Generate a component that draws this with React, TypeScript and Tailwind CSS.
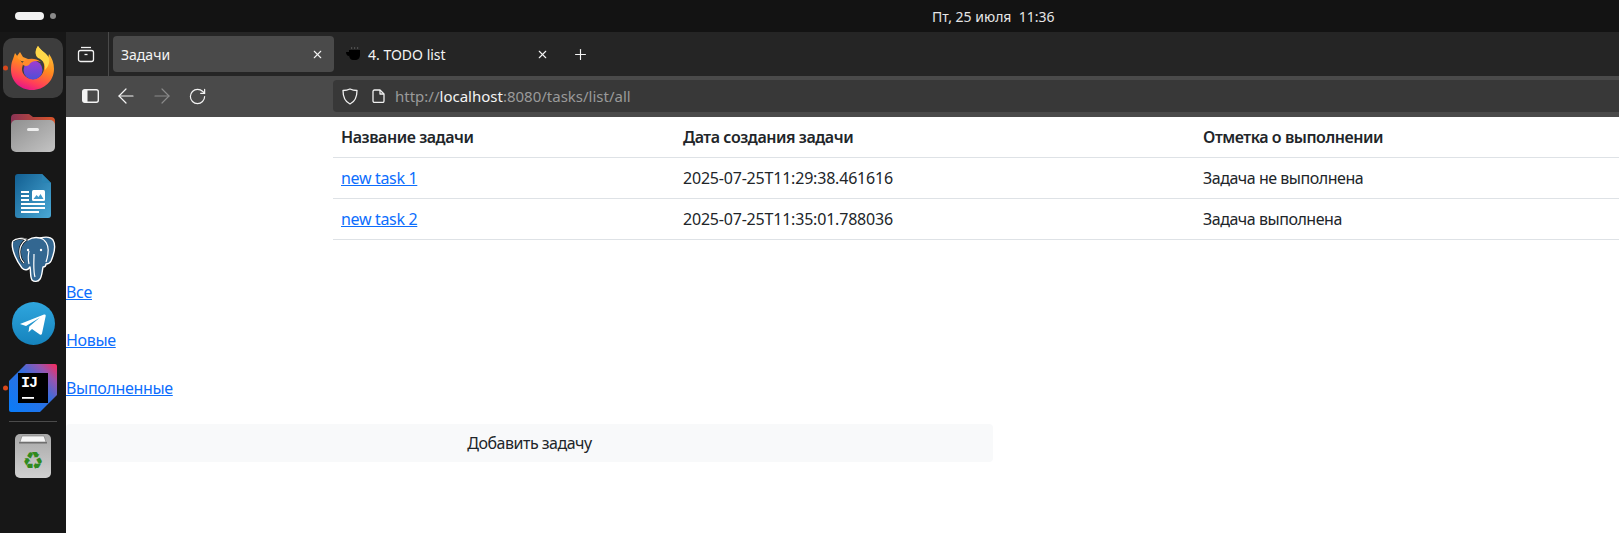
import { ArrowLeft, ArrowRight, Plus, RotateCw, X } from "lucide-react";

const font = { fontFamily: '"Noto Sans", "Liberation Sans", sans-serif' };

function FirefoxIcon() {
  return (
    <svg width="44" height="46" viewBox="0 0 44 46">
      <defs>
        <linearGradient id="ff-body" x1="0.7" y1="0" x2="0.3" y2="1">
          <stop offset="0" stopColor="#ffcb3a" />
          <stop offset="0.45" stopColor="#ff8a1f" />
          <stop offset="0.8" stopColor="#ff3c5a" />
          <stop offset="1" stopColor="#e3128f" />
        </linearGradient>
        <linearGradient id="ff-ball" x1="0.5" y1="0" x2="0.5" y2="1">
          <stop offset="0" stopColor="#a23bd0" />
          <stop offset="1" stopColor="#4f4fd8" />
        </linearGradient>
      </defs>
      <path d="M27 1c-3 4-3 8-1 11 5 1 8 6 7 12-1 7-7 11-13 10-5-1-9-5-9-10 0-2 1-4 1-5L4 8 2 14C0 18 0 22 0 25c0 11 9 20 21 20s22-9 22-21c0-6-2-11-5-15l-1 5C35 8 30 6 27 1z" fill="url(#ff-body)" />
      <path d="M27 1c-3 4-3 9 0 12 5 2 8 6 7 12 3-3 5-7 4-12C36 8 30 6 27 1z" fill="#ffd84a" />
      <path d="M9 7l3 5 5 2c1 0 3 1 3 2-3 0-7 1-10 0-2-1-4-3-4-5z" fill="#ff9a2e" />
      <circle cx="22" cy="25" r="9.500" fill="url(#ff-ball)" />
      <path d="M11 18c4-5 13-6 19-1-5-2-10-1-12 3-3 2-6 1-7-2z" fill="#ff8a2a" />
    </svg>
  );
}

function FolderIcon() {
  return (
    <svg width="44" height="40" viewBox="0 0 44 40">
      <defs>
        <linearGradient id="folder-tab" x1="0" y1="0" x2="1" y2="0">
          <stop offset="0" stopColor="#8a3355" />
          <stop offset="1" stopColor="#d9552a" />
        </linearGradient>
        <linearGradient id="folder-body" x1="0" y1="0" x2="1" y2="1">
          <stop offset="0" stopColor="#8f8f8f" />
          <stop offset="1" stopColor="#c4c4c4" />
        </linearGradient>
      </defs>
      <path d="M0 6a4 4 0 0 1 4-4h14l4 3h18a4 4 0 0 1 4 4v8H0z" fill="url(#folder-tab)" />
      <rect x="0" y="8" width="44" height="32" rx="5" fill="url(#folder-body)" />
      <rect x="16" y="16" width="12" height="3" rx="1.5" fill="#eeeeee" />
    </svg>
  );
}

function WriterIcon() {
  return (
    <svg width="36" height="44" viewBox="0 0 36 44">
      <defs>
        <linearGradient id="writer-bg" x1="0" y1="0" x2="1" y2="1">
          <stop offset="0" stopColor="#125f92" />
          <stop offset="1" stopColor="#4aa9d6" />
        </linearGradient>
      </defs>
      <path d="M3 0h24l9 9v32a3 3 0 0 1-3 3H3a3 3 0 0 1-3-3V3a3 3 0 0 1 3-3z" fill="url(#writer-bg)" />
      <path d="M27 0l9 9h-7a2 2 0 0 1-2-2z" fill="#2a84b4" />
      <rect x="6" y="17" width="8" height="2" fill="#fff" />
      <rect x="6" y="21" width="8" height="2" fill="#fff" />
      <rect x="6" y="25" width="8" height="2" fill="#fff" />
      <rect x="6" y="29" width="24" height="2" fill="#fff" />
      <rect x="6" y="33" width="24" height="2" fill="#fff" />
      <rect x="6" y="37" width="18" height="2" fill="#fff" />
      <rect x="17" y="16" width="13" height="11" rx="1.5" fill="#fff" />
      <path d="M18.500 25l3-4 2 2 2-3 3 5z" fill="#3f98c8" />
    </svg>
  );
}

function PostgresIcon() {
  return (
    <svg width="46" height="48" viewBox="0 0 46 48">
      <path d="M3 5C8 1 14 2 18 4c3-2 8-3 12-2 4-1 10-2 13 2 3 5 1 14-2 21-1 2-3 3-5 3 0 2-1 3-3 3-1 5-1 9-3 12-2 3-6 3-8 1-2-3-1-8-2-13-2 3-5 4-8 1C9 28 7 25 5 20 3 15 1 9 3 5z" fill="#336791" stroke="#ffffff" strokeWidth="1.4" strokeLinejoin="round" />
      <path d="M3 5C6 2 12 2 16 4c-4 3-7 8-6 14 0 3 2 7 4 9" fill="#336791" stroke="#000000" strokeWidth="2.4" />
      <path d="M3 5C6 2 12 2 16 4c-4 3-7 8-6 14 0 3 2 7 4 9" fill="none" stroke="#ffffff" strokeWidth="1.2" />
      <path d="M30 2c5 1 9 7 8 14 0 4-1 7-2 10M24 18c0 8-1 16 1 23M19 15c-1 5-1 9 0 13" fill="none" stroke="#ffffff" strokeWidth="1.2" />
      <circle cx="18" cy="14" r="1.2" fill="#fff" />
      <circle cx="31" cy="14" r="1.2" fill="#fff" />
    </svg>
  );
}

function TelegramIcon() {
  return (
    <svg width="43" height="43" viewBox="0 0 43 43">
      <defs>
        <linearGradient id="tg-bg" x1="0.5" y1="0" x2="0.5" y2="1">
          <stop offset="0" stopColor="#2fa6de" />
          <stop offset="1" stopColor="#1583bd" />
        </linearGradient>
      </defs>
      <circle cx="21.5" cy="21.5" r="21.5" fill="url(#tg-bg)" />
      <path d="M8 22L32 12.500c1-.4 2 .3 1.700 1.600L30 31.500c-.2 1.200-1.300 1.500-2.200 .9L20 27l-3.500 3.200 .8-5.700L28 15.500 14 24z" fill="#ffffff" />
    </svg>
  );
}

function IdeaIcon() {
  return (
    <div className="relative h-[48px] w-[48px]">
      <svg className="absolute inset-0" width="48" height="48" viewBox="0 0 48 48">
        <defs>
          <linearGradient id="ij-bg" x1="0" y1="1" x2="1" y2="0">
            <stop offset="0" stopColor="#087cfa" />
            <stop offset="0.55" stopColor="#2f6fe0" />
            <stop offset="0.8" stopColor="#9755b0" />
            <stop offset="1" stopColor="#fe2857" />
          </linearGradient>
        </defs>
        <path d="M17 0h29a2 2 0 0 1 2 2v29L31 48H2a2 2 0 0 1-2-2V17z" fill="url(#ij-bg)" />
        <rect x="9" y="9" width="30" height="30" fill="#000000" />
        <rect x="13" y="33" width="12" height="1.800" fill="#ffffff" />
      </svg>
      <span className="absolute left-[12px] top-[11px] font-['Liberation_Mono'] text-[15px] font-bold leading-[18px] tracking-[-1px] text-white">
        IJ
      </span>
    </div>
  );
}

function TrashIcon() {
  return (
    <div className="relative h-[46px] w-[38px]">
      <svg className="absolute inset-0" width="38" height="46" viewBox="0 0 38 46">
        <defs>
          <linearGradient id="trash-bg" x1="0.5" y1="0" x2="0.5" y2="1">
            <stop offset="0" stopColor="#a8a8a8" />
            <stop offset="1" stopColor="#d0d0d0" />
          </linearGradient>
        </defs>
        <rect x="1" y="1" width="36" height="44" rx="5" fill="url(#trash-bg)" />
        <path d="M6 9l2-6h22l2 6z" fill="#f4f4f4" stroke="#777777" strokeWidth="0.6" />
        <rect x="5" y="9" width="28" height="1.500" fill="#6f6f6f" />
      </svg>
      <span className="absolute inset-x-0 top-[13px] text-center font-['DejaVu_Sans'] text-[24px] leading-[30px] text-[#2f8a1e]">
        ♻
      </span>
    </div>
  );
}

function ArchiveIcon() {
  return (
    <svg width="18" height="18" viewBox="0 0 18 18" fill="none" stroke="#f2f2f2" strokeWidth="1.300">
      <rect x="1.500" y="5.500" width="15" height="11" rx="2" />
      <path d="M4 2.500h10" />
      <path d="M7.500 9.500h3" />
    </svg>
  );
}

function SidebarIcon() {
  return (
    <svg width="17" height="14" viewBox="0 0 17 14">
      <rect x="0.700" y="0.700" width="15.600" height="12.600" rx="2" fill="none" stroke="#f4f4f4" strokeWidth="1.400" />
      <rect x="1" y="1" width="4.500" height="12" fill="#f4f4f4" />
    </svg>
  );
}

function ShieldIcon() {
  return (
    <svg width="16" height="17" viewBox="0 0 16 17" fill="none" stroke="#f0f0f0" strokeWidth="1.300" strokeLinejoin="round">
      <path d="M8 1c2 1 4.500 1.500 7 1.500 0 6-1.500 11-7 13.500C2.500 13.500 1 8.500 1 2.500 3.500 2.500 6 2 8 1z" />
    </svg>
  );
}

function PageIcon() {
  return (
    <svg width="13" height="14" viewBox="0 0 13 14" fill="none" stroke="#f0f0f0" strokeWidth="1.300" strokeLinejoin="round">
      <path d="M1 2.500A1.500 1.500 0 0 1 2.500 1H8l4 4v7a1.500 1.500 0 0 1-1.500 1.500h-8A1.500 1.500 0 0 1 1 12z" />
      <path d="M8 1v4h4" />
    </svg>
  );
}

function CoffeeIcon() {
  return (
    <svg width="17" height="14" viewBox="0 0 17 14" fill="#000000">
      <path d="M3 3h11v5c0 3-2 5-5 5H7c-2 0-4-2-4-5z" />
      <path d="M0 5h3v4C1 9 0 7 0 5z" />
      <rect x="5" y="0" width="1.200" height="2" fill="#4d4d4d" />
      <rect x="8" y="0" width="1.200" height="2" fill="#4d4d4d" />
      <rect x="11" y="0" width="1.200" height="2" fill="#4d4d4d" />
    </svg>
  );
}

function ActiveDot() {
  return <span className="absolute left-[3px] top-1/2 h-[5px] w-[5px] -translate-y-1/2 rounded-full bg-[#d9481c]" />;
}

function Dock() {
  return (
    <aside className="flex w-[66px] shrink-0 flex-col items-center bg-[#171717] pt-[6px]">
      <div className="relative w-full">
        <div className="mx-auto flex h-[60px] w-[60px] items-center justify-center rounded-[10px] bg-[#3d3d3d]">
          <FirefoxIcon />
        </div>
        <ActiveDot />
      </div>
      <div className="mt-[14px]">
        <FolderIcon />
      </div>
      <div className="mt-[22px]">
        <WriterIcon />
      </div>
      <div className="mt-[18px]">
        <PostgresIcon />
      </div>
      <div className="mt-[18px]">
        <TelegramIcon />
      </div>
      <div className="relative mt-[19px] w-full">
        <div className="flex justify-center">
          <IdeaIcon />
        </div>
        <ActiveDot />
      </div>
      <div className="mt-[9px] h-px w-[48px] bg-[#4b4b4b]" />
      <div className="mt-[11px]">
        <TrashIcon />
      </div>
    </aside>
  );
}

function BrowserChrome() {
  return (
    <div className="shrink-0 text-[#f4f4f4]">
      {/* вкладки */}
      <div className="flex h-[44px] items-center bg-[#252525]">
        <div className="flex h-full w-[43px] items-center justify-center border-r border-[#4a4a4a] pr-[3px]">
          <ArchiveIcon />
        </div>
        <div className="ml-[4px] flex h-[36px] w-[221px] items-center justify-between rounded-[4px] bg-[#4a4a4a] pl-[8px] pr-[10px]">
          <span className="text-[14px]">Задачи</span>
          <X size={13} strokeWidth={2} />
        </div>
        <div className="flex h-[36px] w-[225px] items-center justify-between pl-[12px] pr-[10px]">
          <div className="flex items-center gap-[5px]">
            <CoffeeIcon />
            <span className="text-[14px]">4. TODO list</span>
          </div>
          <X size={13} strokeWidth={2} />
        </div>
        <Plus size={17} strokeWidth={1.6} className="ml-[13px]" />
      </div>
      {/* панель адреса */}
      <div className="flex h-[41px] items-center bg-[#4a4a4a] pb-[1px]">
        <div className="flex w-[267px] items-center pl-[16px]">
          <SidebarIcon />
          <ArrowLeft size={24} strokeWidth={1.2} className="ml-[15px]" />
          <ArrowRight size={24} strokeWidth={1.2} className="ml-[12px] text-[#8a8a8a]" />
          <RotateCw size={19} strokeWidth={1.5} className="ml-[14px]" />
        </div>
        <div className="flex h-[32px] flex-1 items-center rounded-l-[4px] bg-[#383838] pl-[9px]">
          <ShieldIcon />
          <div className="ml-[14px]">
            <PageIcon />
          </div>
          <div className="ml-[10px] text-[15px] text-[#9a9a9a]">
            http://<span className="text-[#f4f4f4]">localhost</span>:8080/tasks/list/all
          </div>
        </div>
      </div>
    </div>
  );
}

const tasks = [
  { id: 1, name: "new task 1", created: "2025-07-25T11:29:38.461616", status: "Задача не выполнена" },
  { id: 2, name: "new task 2", created: "2025-07-25T11:35:01.788036", status: "Задача выполнена" },
];

function Content() {
  const linkClass = "tracking-[-0.33px] text-[#0d6efd] underline";
  return (
    <main className="flex-1 bg-white text-[16px] leading-[24px] text-[#212529]">
      <div className="ml-[267px]">
        <table className="w-full border-collapse text-left">
          <thead>
            <tr className="h-[40px] border-b border-[#dee2e6] tracking-[-0.45px]">
              <th className="w-[350px] pl-[8px] font-semibold">Название задачи</th>
              <th className="w-[520px] font-semibold">Дата создания задачи</th>
              <th className="font-semibold">Отметка о выполнении</th>
            </tr>
          </thead>
          <tbody>
            {tasks.map((task) => (
              <tr key={task.id} className="h-[41px] border-b border-[#dee2e6]">
                <td className="pl-[8px]">
                  <a href="#" className={linkClass}>
                    {task.name}
                  </a>
                </td>
                <td className="tracking-[-0.2px]">{task.created}</td>
                <td className="tracking-[-0.47px]">{task.status}</td>
              </tr>
            ))}
          </tbody>
        </table>
      </div>
      <nav className="mt-[40px] flex flex-col items-start gap-[24px]">
        <a href="#" className={linkClass}>
          Все
        </a>
        <a href="#" className={linkClass}>
          Новые
        </a>
        <a href="#" className={linkClass}>
          Выполненные
        </a>
      </nav>
      <button type="button" className="mt-[24px] block h-[38px] w-[927px] rounded-[4px] bg-[#f8f9fa] text-center tracking-[-0.5px] text-[#212529]">
        Добавить задачу
      </button>
    </main>
  );
}

export default function App() {
  return (
    <div className="flex h-[533px] w-[1619px] flex-col overflow-hidden bg-[#131313]" style={font}>
      {/* системная панель */}
      <div className="flex h-[32px] shrink-0 items-center pl-[15px]">
        <span className="h-[8px] w-[29px] rounded-full bg-[#f2f2f2]" />
        <span className="ml-[6px] h-[6px] w-[6px] rounded-full bg-[#8a8a8a]" />
        <span className="ml-[876px] text-[14px] text-[#e6e6e6]">Пт, 25 июля&nbsp;&nbsp;11:36</span>
      </div>
      <div className="flex min-h-0 flex-1">
        <Dock />
        <div className="flex min-w-0 flex-1 flex-col">
          <BrowserChrome />
          <Content />
        </div>
      </div>
    </div>
  );
}
